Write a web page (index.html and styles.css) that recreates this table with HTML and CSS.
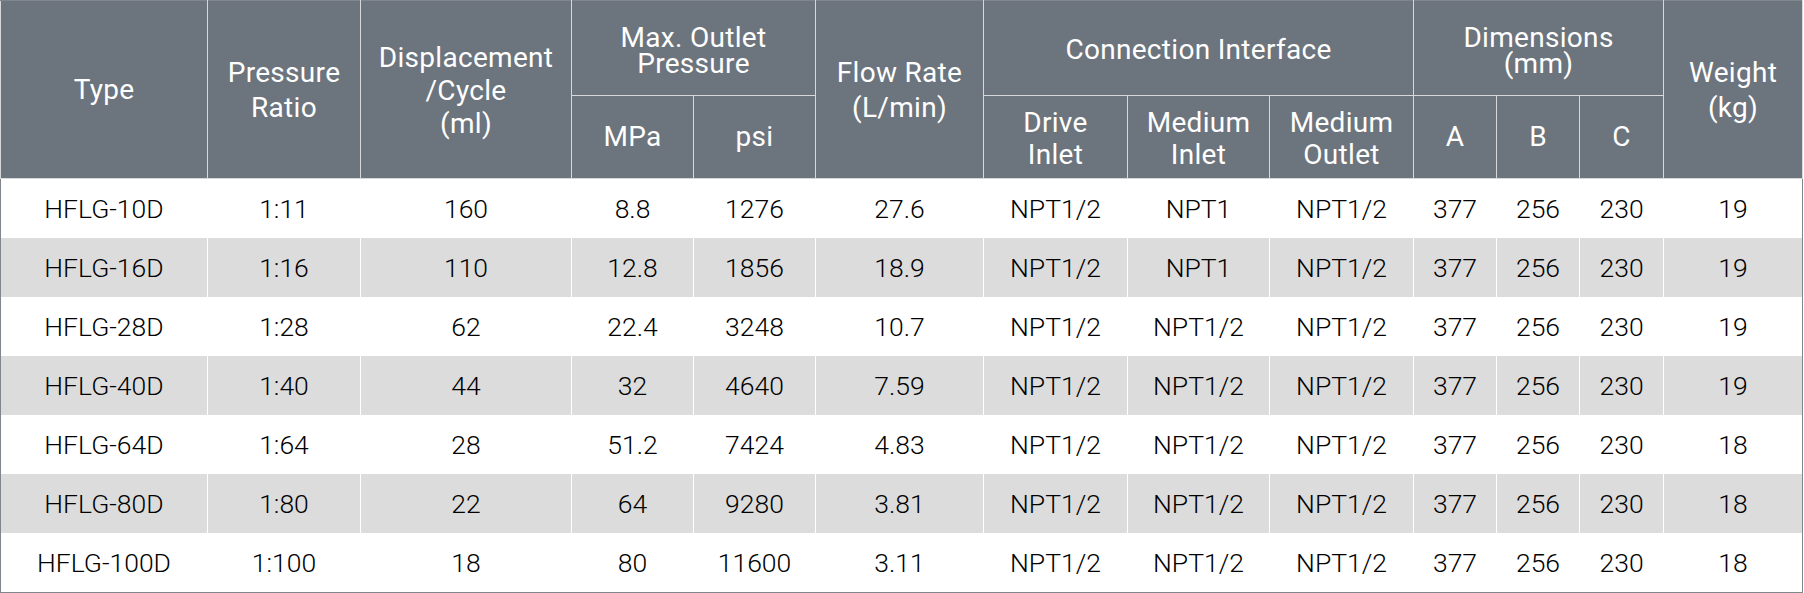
FILE: index.html
```html
<!DOCTYPE html>
<html lang="en">
<head>
<meta charset="utf-8">
<title>HFLG Series Specifications</title>
<link rel="stylesheet" href="styles.css">
</head>
<body>
<table class="spec">
  <colgroup>
    <col class="c-type"><col class="c-ratio"><col class="c-disp"><col class="c-mpa"><col class="c-psi"><col class="c-flow"><col class="c-drive"><col class="c-min"><col class="c-mout"><col class="c-a"><col class="c-b"><col class="c-c"><col class="c-w">
  </colgroup>
  <thead>
    <tr class="h1">
      <th rowspan="2">Type</th>
      <th rowspan="2" class="loose">Pressure<br>Ratio</th>
      <th rowspan="2" class="mid">Displacement<br>/Cycle<br>(ml)</th>
      <th colspan="2" class="tight">Max. Outlet<br>Pressure</th>
      <th rowspan="2" class="loose">Flow Rate<br>(L/min)</th>
      <th colspan="3" class="group">Connection Interface</th>
      <th colspan="3" class="tight">Dimensions<br>(mm)</th>
      <th rowspan="2" class="loose">Weight<br>(kg)</th>
    </tr>
    <tr class="h2">
      <th>MPa</th>
      <th>psi</th>
      <th class="two">Drive<br>Inlet</th>
      <th class="two">Medium<br>Inlet</th>
      <th class="two">Medium<br>Outlet</th>
      <th>A</th>
      <th>B</th>
      <th>C</th>
    </tr>
  </thead>
  <tbody>
    <tr><td>HFLG-10D</td><td>1:11</td><td>160</td><td>8.8</td><td>1276</td><td>27.6</td><td>NPT1/2</td><td>NPT1</td><td>NPT1/2</td><td>377</td><td>256</td><td>230</td><td>19</td></tr>
    <tr><td>HFLG-16D</td><td>1:16</td><td>110</td><td>12.8</td><td>1856</td><td>18.9</td><td>NPT1/2</td><td>NPT1</td><td>NPT1/2</td><td>377</td><td>256</td><td>230</td><td>19</td></tr>
    <tr><td>HFLG-28D</td><td>1:28</td><td>62</td><td>22.4</td><td>3248</td><td>10.7</td><td>NPT1/2</td><td>NPT1/2</td><td>NPT1/2</td><td>377</td><td>256</td><td>230</td><td>19</td></tr>
    <tr><td>HFLG-40D</td><td>1:40</td><td>44</td><td>32</td><td>4640</td><td>7.59</td><td>NPT1/2</td><td>NPT1/2</td><td>NPT1/2</td><td>377</td><td>256</td><td>230</td><td>19</td></tr>
    <tr><td>HFLG-64D</td><td>1:64</td><td>28</td><td>51.2</td><td>7424</td><td>4.83</td><td>NPT1/2</td><td>NPT1/2</td><td>NPT1/2</td><td>377</td><td>256</td><td>230</td><td>18</td></tr>
    <tr><td>HFLG-80D</td><td>1:80</td><td>22</td><td>64</td><td>9280</td><td>3.81</td><td>NPT1/2</td><td>NPT1/2</td><td>NPT1/2</td><td>377</td><td>256</td><td>230</td><td>18</td></tr>
    <tr><td>HFLG-100D</td><td>1:100</td><td>18</td><td>80</td><td>11600</td><td>3.11</td><td>NPT1/2</td><td>NPT1/2</td><td>NPT1/2</td><td>377</td><td>256</td><td>230</td><td>18</td></tr>
  </tbody>
</table>
</body>
</html>
```

FILE: styles.css
```css
html, body {
  margin: 0;
  padding: 0;
  background: #ffffff;
}

.spec {
  width: 1803px;
  border-collapse: collapse;
  table-layout: fixed;
  border: 1px solid #80868c;
  font-family: Roboto, "Liberation Sans", Arial, sans-serif;
}

.c-type { width: 207px; }
.c-ratio { width: 153px; }
.c-disp { width: 211px; }
.c-mpa { width: 122px; }
.c-psi { width: 122px; }
.c-flow { width: 168px; }
.c-drive { width: 144px; }
.c-min { width: 142px; }
.c-mout { width: 144px; }
.c-a { width: 83px; }
.c-b { width: 83px; }
.c-c { width: 84px; }
.c-w { width: 139px; }

.spec th {
  background: #6c747d;
  color: #ffffff;
  font-weight: 400;
  font-size: 28px;
  letter-spacing: 0.3px;
  line-height: 32px;
  text-align: center;
  vertical-align: middle;
  padding: 0;
  border: 1px solid #d6d8da;
}

.spec th.loose {
  line-height: 35px;
}

.spec th.mid {
  line-height: 33px;
  padding-top: 2px;
}

.spec th.tight {
  line-height: 26px;
  padding-top: 5px;
}

.spec th.group {
  padding-top: 4px;
}

.spec th.two {
  line-height: 32px;
  padding-top: 4px;
}

.spec .h1 th {
  border-top-color: #80868c;
}

.spec .h1 { height: 95px; }
.spec .h2 { height: 83px; }

.spec td {
  height: 59px;
  padding: 0;
  text-align: center;
  vertical-align: middle;
  font-size: 26.5px;
  font-weight: 300;
  color: #000000;
  border: 1px solid #ffffff;
  border-top: 0;
  border-bottom: 0;
}

.spec tbody tr:nth-child(even) td {
  background: #dcdcdc;
}

.spec tbody td:first-child { border-left-color: #80868c; }
.spec tbody td:last-child { border-right-color: #80868c; }
.spec tbody tr:last-child td { border-bottom: 1px solid #80868c; }
```
